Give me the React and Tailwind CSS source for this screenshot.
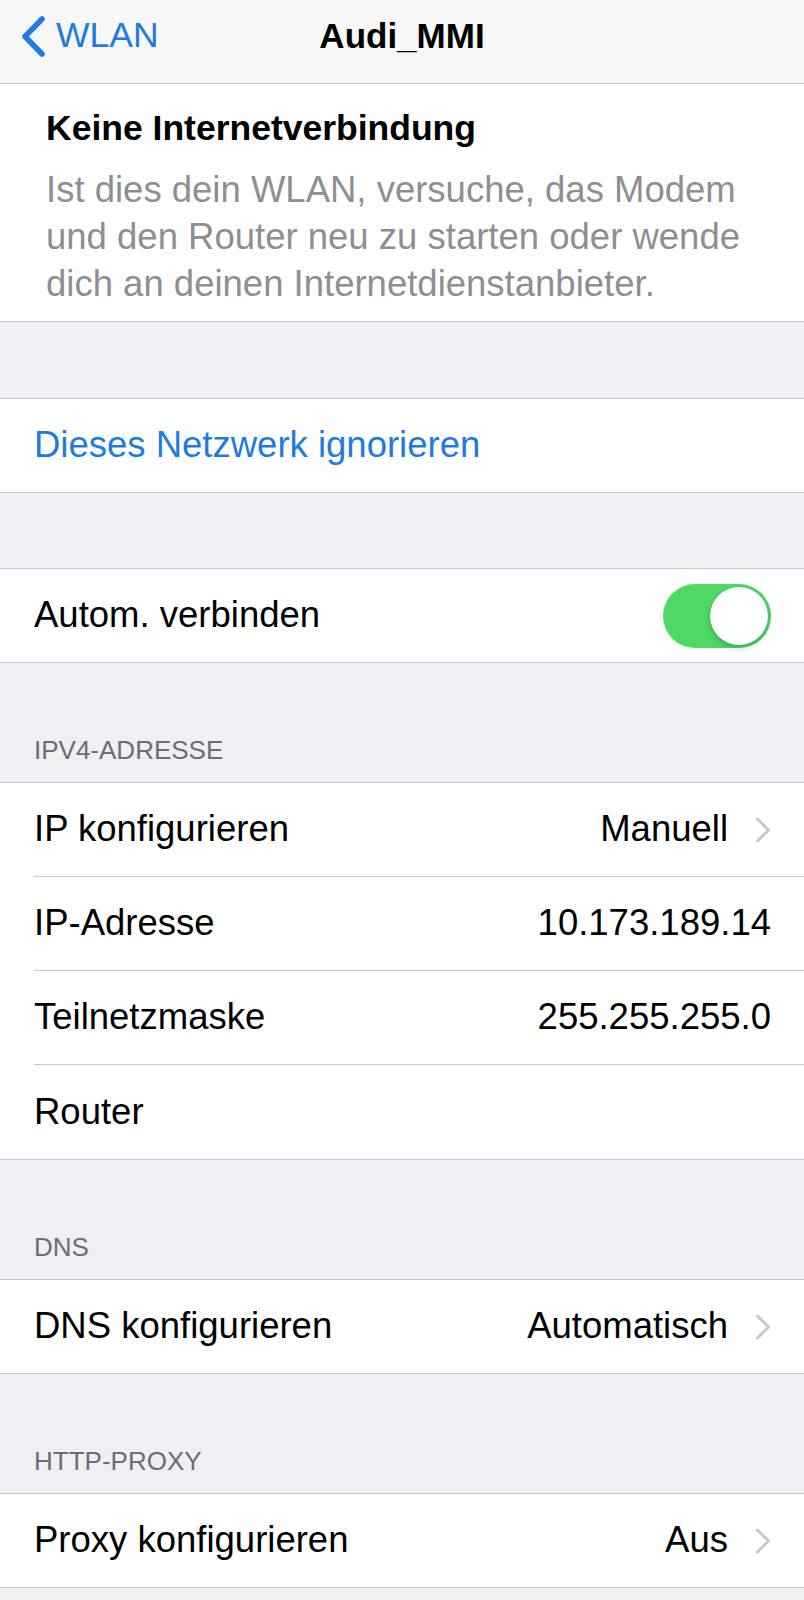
import React from 'react'

const font = { fontFamily: '"Liberation Sans", Arial, sans-serif' }

function Chevron() {
  return (
    <svg width="16" height="26" viewBox="0 0 16 26" fill="none" className="shrink-0">
      <path d="M2.5 2L13.5 13L2.5 24" stroke="#c7c7cc" strokeWidth="3" strokeLinecap="round" strokeLinejoin="round" />
    </svg>
  )
}

function Toggle({ on }) {
  return (
    <div className={`w-[108px] h-[64px] rounded-full p-[3px] flex items-center ${on ? 'bg-[#4cd964] justify-end' : 'bg-[#e5e5ea] justify-start'}`}>
      <div className="w-[58px] h-[58px] rounded-full bg-white shadow-[0_3px_6px_rgba(0,0,0,0.22)]" />
    </div>
  )
}

function Row({ label, value, chevron, blue, right, last, tall }) {
  return (
    <div className="bg-white pl-[34px]">
      <div className={`${tall ? 'h-[94px]' : 'h-[93px]'} pr-[33px] flex items-center justify-between ${last ? '' : 'border-b border-[#c8c7cc]'}`}>
        <span className={`text-[36.5px] ${blue ? 'text-[#1f7ae6]' : 'text-black'}`}>{label}</span>
        {right}
        {value && (
          <div className="flex items-center gap-[27px]">
            <span className="text-[36.5px] text-black">{value}</span>
            {chevron && <Chevron />}
          </div>
        )}
      </div>
    </div>
  )
}

function Group({ children }) {
  return <div className="border-y border-[#c8c7cc] bg-white">{children}</div>
}

function SectionHeader({ title }) {
  return (
    <div className="pt-[72px] pb-[17px] pl-[34px]">
      <div className="text-[26px] leading-[30px] text-[#6d6d72] uppercase">{title}</div>
    </div>
  )
}

export default function App() {
  return (
    <div className="min-h-[1600px] bg-[#efeff4]" style={font}>
      {/* navigation bar */}
      <div className="h-[84px] bg-[#f7f7f8] border-b border-[#c4c4c8] pb-[11px]">
        <div className="h-[72px] grid grid-cols-[1fr_auto_1fr] items-center">
          <div className="flex items-center pl-[20px] gap-[10px] text-[#1f7ae6]">
            <svg width="26" height="43" viewBox="0 0 26 43" fill="none">
              <path d="M22 4L5 21.5L22 39" stroke="currentColor" strokeWidth="5.5" strokeLinecap="round" strokeLinejoin="round" />
            </svg>
            <span className="text-[35.5px]">WLAN</span>
          </div>
          <div className="text-[35px] font-bold text-black">Audi_MMI</div>
          <div />
        </div>
      </div>

      {/* no internet notice */}
      <div className="bg-white border-b border-[#c8c7cc] pl-[46px] pr-[34px] pt-[22px] pb-[14px]">
        <div className="text-[35.5px] leading-[44px] font-bold text-black">Keine Internetverbindung</div>
        <p className="mt-[16px] text-[36.5px] leading-[47px] text-[#8e8e93]">
          Ist dies dein WLAN, versuche, das Modem und den Router neu zu starten oder wende dich an deinen Internetdienstanbieter.
        </p>
      </div>

      <div className="h-[76px]" />
      <Group>
        <Row label="Dieses Netzwerk ignorieren" blue last />
      </Group>

      <div className="h-[75px]" />
      <Group>
        <Row label="Autom. verbinden" right={<Toggle on />} last />
      </Group>

      <SectionHeader title="IPv4-Adresse" />
      <Group>
        <Row label="IP konfigurieren" value="Manuell" chevron tall />
        <Row label="IP-Adresse" value="10.173.189.14" tall />
        <Row label="Teilnetzmaske" value="255.255.255.0" tall />
        <Row label="Router" last tall />
      </Group>

      <SectionHeader title="DNS" />
      <Group>
        <Row label="DNS konfigurieren" value="Automatisch" chevron last />
      </Group>

      <SectionHeader title="HTTP-Proxy" />
      <Group>
        <Row label="Proxy konfigurieren" value="Aus" chevron last />
      </Group>
    </div>
  )
}
